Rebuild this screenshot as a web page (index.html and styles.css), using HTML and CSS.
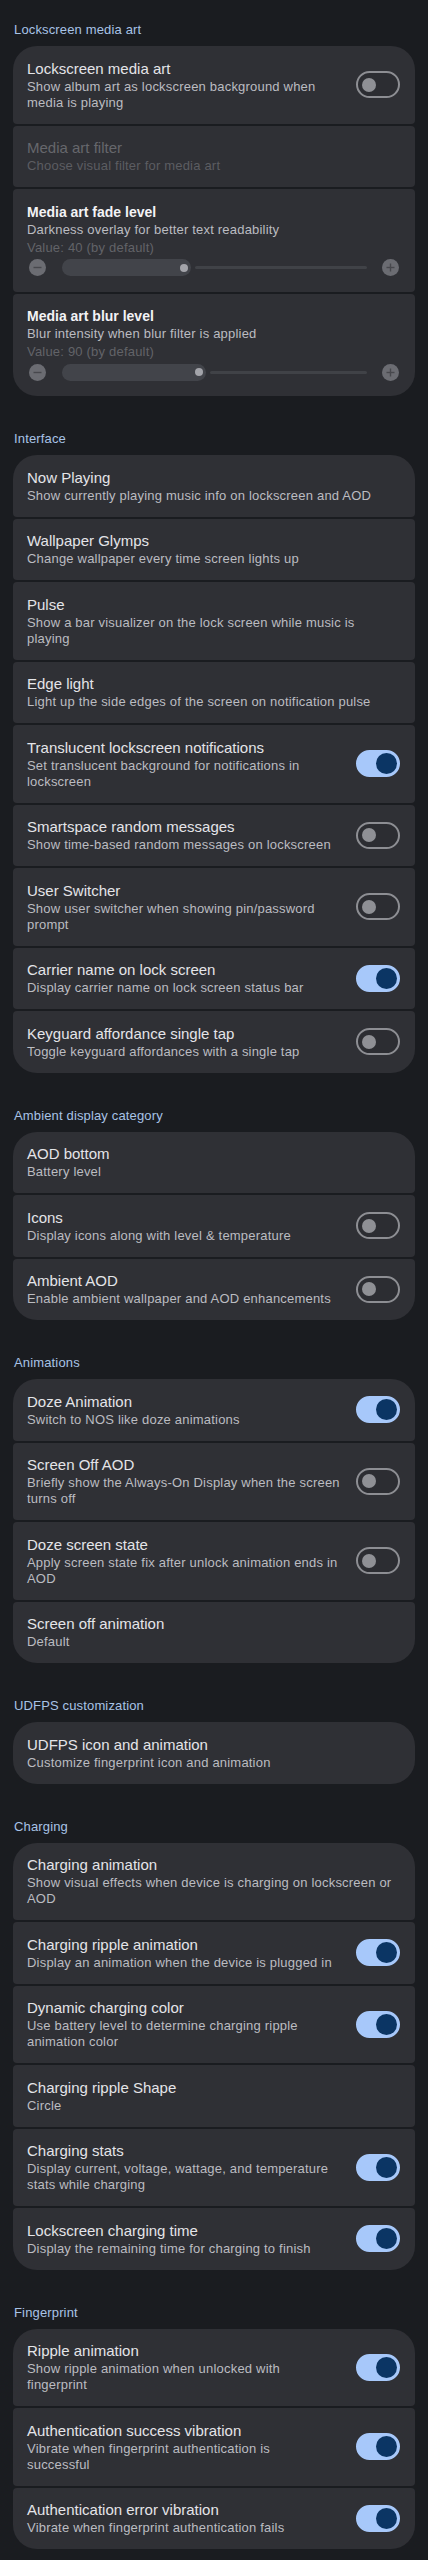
FILE: index.html
```html
<!DOCTYPE html>
<html lang="en">
<head>
<meta charset="utf-8">
<title>Lockscreen settings</title>
<link rel="stylesheet" href="styles.css">
</head>
<body>
<main class="page">

  <section class="group">
    <h2 class="group-title">Lockscreen media art</h2>
    <div class="card">
      <div class="item">
        <div class="text">
          <div class="title">Lockscreen media art</div>
          <div class="summary">Show album art as lockscreen background when media is playing</div>
        </div>
        <span class="switch"><span class="thumb"></span></span>
      </div>
      <div class="item disabled">
        <div class="text">
          <div class="title">Media art filter</div>
          <div class="summary">Choose visual filter for media art</div>
        </div>
      </div>
      <div class="item slider-item">
        <div class="text">
          <div class="title strong">Media art fade level</div>
          <div class="summary">Darkness overlay for better text readability</div>
          <div class="value">Value: 40 (by default)</div>
        </div>
        <div class="slider-row">
          <svg class="step" viewBox="0 0 17 17" width="17" height="17"><circle cx="8.5" cy="8.5" r="8.5" fill="#6b6c72"/><line x1="4.5" y1="8.5" x2="12.5" y2="8.5" stroke="#47484d" stroke-width="1.4"/></svg>
          <div class="track">
            <div class="fill" style="width:42.5%"><span class="dot"></span></div>
            <div class="rest"></div>
          </div>
          <svg class="step" viewBox="0 0 17 17" width="17" height="17"><circle cx="8.5" cy="8.5" r="8.5" fill="#6b6c72"/><line x1="4.5" y1="8.5" x2="12.5" y2="8.5" stroke="#47484d" stroke-width="1.4"/><line x1="8.5" y1="4.5" x2="8.5" y2="12.5" stroke="#47484d" stroke-width="1.4"/></svg>
        </div>
      </div>
      <div class="item slider-item">
        <div class="text">
          <div class="title strong">Media art blur level</div>
          <div class="summary">Blur intensity when blur filter is applied</div>
          <div class="value">Value: 90 (by default)</div>
        </div>
        <div class="slider-row">
          <svg class="step" viewBox="0 0 17 17" width="17" height="17"><circle cx="8.5" cy="8.5" r="8.5" fill="#6b6c72"/><line x1="4.5" y1="8.5" x2="12.5" y2="8.5" stroke="#47484d" stroke-width="1.4"/></svg>
          <div class="track">
            <div class="fill" style="width:47.4%"><span class="dot"></span></div>
            <div class="rest"></div>
          </div>
          <svg class="step" viewBox="0 0 17 17" width="17" height="17"><circle cx="8.5" cy="8.5" r="8.5" fill="#6b6c72"/><line x1="4.5" y1="8.5" x2="12.5" y2="8.5" stroke="#47484d" stroke-width="1.4"/><line x1="8.5" y1="4.5" x2="8.5" y2="12.5" stroke="#47484d" stroke-width="1.4"/></svg>
        </div>
      </div>
    </div>
  </section>

  <section class="group">
    <h2 class="group-title">Interface</h2>
    <div class="card">
      <div class="item"><div class="text"><div class="title">Now Playing</div><div class="summary">Show currently playing music info on lockscreen and AOD</div></div></div>
      <div class="item"><div class="text"><div class="title">Wallpaper Glymps</div><div class="summary">Change wallpaper every time screen lights up</div></div></div>
      <div class="item"><div class="text"><div class="title">Pulse</div><div class="summary">Show a bar visualizer on the lock screen while music is playing</div></div></div>
      <div class="item"><div class="text"><div class="title">Edge light</div><div class="summary">Light up the side edges of the screen on notification pulse</div></div></div>
      <div class="item"><div class="text"><div class="title">Translucent lockscreen notifications</div><div class="summary">Set translucent background for notifications in lockscreen</div></div><span class="switch on"><span class="thumb"></span></span></div>
      <div class="item"><div class="text"><div class="title">Smartspace random messages</div><div class="summary">Show time-based random messages on lockscreen</div></div><span class="switch"><span class="thumb"></span></span></div>
      <div class="item"><div class="text"><div class="title">User Switcher</div><div class="summary">Show user switcher when showing pin/password prompt</div></div><span class="switch"><span class="thumb"></span></span></div>
      <div class="item"><div class="text"><div class="title">Carrier name on lock screen</div><div class="summary">Display carrier name on lock screen status bar</div></div><span class="switch on"><span class="thumb"></span></span></div>
      <div class="item"><div class="text"><div class="title">Keyguard affordance single tap</div><div class="summary">Toggle keyguard affordances with a single tap</div></div><span class="switch"><span class="thumb"></span></span></div>
    </div>
  </section>

  <section class="group">
    <h2 class="group-title">Ambient display category</h2>
    <div class="card">
      <div class="item"><div class="text"><div class="title">AOD bottom</div><div class="summary">Battery level</div></div></div>
      <div class="item"><div class="text"><div class="title">Icons</div><div class="summary">Display icons along with level &amp; temperature</div></div><span class="switch"><span class="thumb"></span></span></div>
      <div class="item"><div class="text"><div class="title">Ambient AOD</div><div class="summary">Enable ambient wallpaper and AOD enhancements</div></div><span class="switch"><span class="thumb"></span></span></div>
    </div>
  </section>

  <section class="group">
    <h2 class="group-title">Animations</h2>
    <div class="card">
      <div class="item"><div class="text"><div class="title">Doze Animation</div><div class="summary">Switch to NOS like doze animations</div></div><span class="switch on"><span class="thumb"></span></span></div>
      <div class="item"><div class="text"><div class="title">Screen Off AOD</div><div class="summary">Briefly show the Always-On Display when the screen turns off</div></div><span class="switch"><span class="thumb"></span></span></div>
      <div class="item"><div class="text"><div class="title">Doze screen state</div><div class="summary">Apply screen state fix after unlock animation ends in AOD</div></div><span class="switch"><span class="thumb"></span></span></div>
      <div class="item"><div class="text"><div class="title">Screen off animation</div><div class="summary">Default</div></div></div>
    </div>
  </section>

  <section class="group">
    <h2 class="group-title">UDFPS customization</h2>
    <div class="card">
      <div class="item"><div class="text"><div class="title">UDFPS icon and animation</div><div class="summary">Customize fingerprint icon and animation</div></div></div>
    </div>
  </section>

  <section class="group">
    <h2 class="group-title">Charging</h2>
    <div class="card">
      <div class="item"><div class="text"><div class="title">Charging animation</div><div class="summary">Show visual effects when device is charging on lockscreen or AOD</div></div></div>
      <div class="item"><div class="text"><div class="title">Charging ripple animation</div><div class="summary">Display an animation when the device is plugged in</div></div><span class="switch on"><span class="thumb"></span></span></div>
      <div class="item"><div class="text"><div class="title">Dynamic charging color</div><div class="summary">Use battery level to determine charging ripple animation color</div></div><span class="switch on"><span class="thumb"></span></span></div>
      <div class="item"><div class="text"><div class="title">Charging ripple Shape</div><div class="summary">Circle</div></div></div>
      <div class="item"><div class="text"><div class="title">Charging stats</div><div class="summary">Display current, voltage, wattage, and temperature stats while charging</div></div><span class="switch on"><span class="thumb"></span></span></div>
      <div class="item"><div class="text"><div class="title">Lockscreen charging time</div><div class="summary">Display the remaining time for charging to finish</div></div><span class="switch on"><span class="thumb"></span></span></div>
    </div>
  </section>

  <section class="group">
    <h2 class="group-title">Fingerprint</h2>
    <div class="card">
      <div class="item"><div class="text"><div class="title">Ripple animation</div><div class="summary">Show ripple animation when unlocked with<br>fingerprint</div></div><span class="switch on"><span class="thumb"></span></span></div>
      <div class="item"><div class="text"><div class="title">Authentication success vibration</div><div class="summary">Vibrate when fingerprint authentication is<br>successful</div></div><span class="switch on"><span class="thumb"></span></span></div>
      <div class="item"><div class="text"><div class="title">Authentication error vibration</div><div class="summary">Vibrate when fingerprint authentication fails</div></div><span class="switch on"><span class="thumb"></span></span></div>
    </div>
  </section>

</main>
</body>
</html>
```

FILE: styles.css
```css
html {
  background: #1a1c20;
}

body {
  margin: 0;
  background: #1a1c20;
  font-family: "Liberation Sans", Arial, sans-serif;
  color: #e4e4e8;
}

.page {
  padding: 22px 13px 13px;
}

.group + .group {
  margin-top: 35px;
}

.group-title {
  margin: 0 0 8px 1px;
  font-size: 13px;
  line-height: 16px;
  font-weight: 400;
  letter-spacing: 0.15px;
  color: #a8c3e6;
}

.card {
  display: flex;
  flex-direction: column;
  gap: 2px;
}

.item {
  display: flex;
  align-items: center;
  gap: 12px;
  padding: 12.75px 15px 12.75px 14px;
  background: #2f3035;
  border-radius: 4px;
}

.item:first-child {
  border-top-left-radius: 24px;
  border-top-right-radius: 24px;
}

.item:last-child {
  border-bottom-left-radius: 24px;
  border-bottom-right-radius: 24px;
}

.text {
  flex: 1;
  min-width: 0;
}

.title {
  font-size: 15px;
  line-height: 20px;
  color: #e4e4e8;
}

.title.strong {
  font-size: 14px;
  font-weight: 700;
  color: #f3f3f6;
}

.summary {
  font-size: 13px;
  line-height: 16px;
  letter-spacing: 0.2px;
  color: #bbbcc1;
}

.disabled .title {
  color: #66676c;
}

.disabled .summary {
  color: #5c5d62;
}

.value {
  margin-top: 1px;
  font-size: 13px;
  line-height: 18px;
  letter-spacing: 0.2px;
  color: #626368;
}

/* switches */
.switch {
  flex: none;
  box-sizing: border-box;
  width: 44px;
  height: 27px;
  border: 2px solid #8d8e93;
  border-radius: 14px;
  display: flex;
  align-items: center;
  justify-content: flex-start;
  padding-left: 4.3px;
  background: #2c2d32;
}

.switch .thumb {
  width: 14px;
  height: 14px;
  border-radius: 50%;
  background: #8f9095;
}

.switch.on {
  border-color: #a7c8fa;
  background: #a7c8fa;
  justify-content: flex-end;
  padding-left: 0;
  padding-right: 0.8px;
}

.switch.on .thumb {
  width: 21px;
  height: 21px;
  background: #0b3564;
}

/* slider items */
.slider-item {
  flex-direction: column;
  align-items: stretch;
  gap: 0;
}

.slider-row {
  display: flex;
  align-items: center;
  height: 22px;
  padding: 0 1.5px 0 2px;
}

.step {
  flex: none;
  display: block;
}

.track {
  flex: 1;
  display: flex;
  align-items: center;
  gap: 4px;
  height: 17px;
  margin: 0 14.5px 0 15.5px;
}

.fill {
  flex: none;
  box-sizing: border-box;
  height: 17px;
  border-radius: 9px;
  background: #42444a;
  display: flex;
  align-items: center;
  justify-content: flex-end;
  padding-right: 3.7px;
}

.dot {
  width: 8px;
  height: 8px;
  border-radius: 50%;
  background: #a3a4aa;
}

.rest {
  flex: 1;
  height: 3px;
  border-radius: 2px;
  background: #404247;
}
```
